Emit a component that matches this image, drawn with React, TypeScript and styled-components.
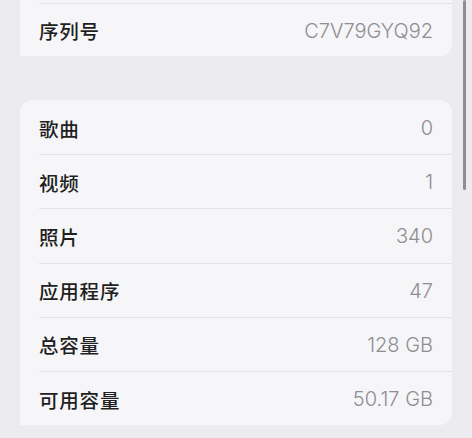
import { createGlobalStyle } from "styled-components";
import styled from "styled-components";

const GlobalStyle = createGlobalStyle`
  html, body {
    margin: 0;
    padding: 0;
    background: #ecebf0;
    overflow: hidden;
  }
`;

const Screen = styled.div`
  position: relative;
  width: 472px;
  height: 438px;
  overflow: hidden;
  background: #ecebf0;
  font-family: Inter, "Noto Sans CJK SC", sans-serif;
`;

// content is scrolled: the first card begins above the viewport
const Scroller = styled.div`
  display: flex;
  flex-direction: column;
  gap: 44px;
  padding: 0 20px;
  margin-top: -10px;
`;

const Card = styled.div<{ $clipTop?: boolean }>`
  background: #f6f5f8;
  border-radius: 12px;
  display: flex;
  flex-direction: column;
  padding-top: ${(p) => (p.$clipTop ? 13 : 0)}px;
`;

const Row = styled.div<{ $h: number; $line?: boolean }>`
  display: flex;
  align-items: center;
  justify-content: space-between;
  height: ${(p) => p.$h}px;
  padding-left: 19px;
  padding-right: 19px;
  box-shadow: ${(p) =>
    p.$line ? "inset 19px 0 0 #f6f5f8, inset 0 1px 0 #e3e2e6" : "none"};
`;

const Label = styled.span`
  font-family: "Noto Sans CJK SC", sans-serif;
  font-size: 19.5px;
  font-weight: 500;
  color: #1f1f22;
  letter-spacing: 0.8px;
  padding-top: 2px;
`;

const Value = styled.span`
  font-family: Inter, "Noto Sans", sans-serif;
  font-size: 20px;
  font-weight: 300;
  color: #8e8d92;
  padding-top: 2px;
`;

const ScrollBar = styled.div`
  position: absolute;
  right: 6px;
  top: 0;
  width: 3px;
  height: 190px;
  border-radius: 2px;
  background: #8e8d93;
`;

const mediaRows = [
  { label: "歌曲", value: "0" },
  { label: "视频", value: "1" },
  { label: "照片", value: "340" },
  { label: "应用程序", value: "47" },
  { label: "总容量", value: "128 GB" },
  { label: "可用容量", value: "50.17 GB" },
];

export default function App() {
  return (
    <Screen>
      <GlobalStyle />
      <Scroller>
        <Card $clipTop>
          <Row $h={53} $line>
            <Label>序列号</Label>
            <Value>C7V79GYQ92</Value>
          </Row>
        </Card>
        <Card>
          {mediaRows.map((r, i) => (
            <Row key={r.label} $h={54.2} $line={i > 0}>
              <Label>{r.label}</Label>
              <Value>{r.value}</Value>
            </Row>
          ))}
        </Card>
      </Scroller>
      <ScrollBar />
    </Screen>
  );
}
